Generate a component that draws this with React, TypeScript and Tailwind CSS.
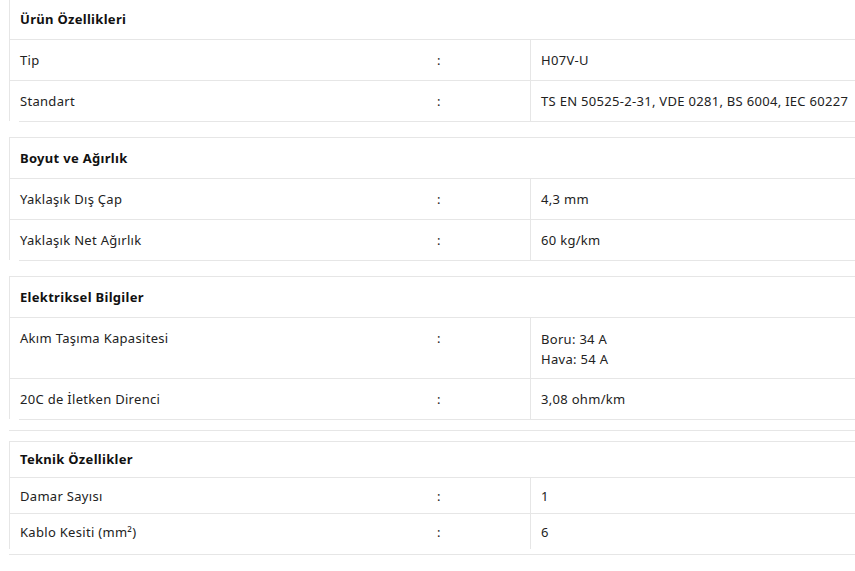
const sections = [
  {
    title: "Ürün Özellikleri",
    rows: [
      { label: "Tip", value: ["H07V-U"] },
      { label: "Standart", value: ["TS EN 50525-2-31, VDE 0281, BS 6004, IEC 60227"] },
    ],
  },
  {
    title: "Boyut ve Ağırlık",
    rows: [
      { label: "Yaklaşık Dış Çap", value: ["4,3 mm"] },
      { label: "Yaklaşık Net Ağırlık", value: ["60 kg/km"] },
    ],
  },
  {
    title: "Elektriksel Bilgiler",
    rows: [
      { label: "Akım Taşıma Kapasitesi", value: ["Boru: 34 A", "Hava: 54 A"] },
      { label: "20C de İletken Direnci", value: ["3,08 ohm/km"] },
    ],
  },
];

function Row({ label, value, last, h }: { label: string; value: string[]; last?: boolean; h: string }) {
  const multi = value.length > 1;
  return (
    <div className={`flex ${last ? "" : "border-b border-[#e6e6e6]"}`}>
      <div className={`w-[427px] pl-[10px] flex ${multi ? "items-start pt-[11px]" : "items-center pt-[2px]"} ${h}`}>
        {label}
      </div>
      <div className={`w-[93px] flex ${multi ? "items-start pt-[11px]" : "items-center pt-[2px]"}`}>:</div>
      <div className={`flex-1 border-l border-[#e6e6e6] pl-[10px] flex flex-col ${multi ? "justify-start pt-[11px] leading-[20px]" : "justify-center pt-[2px]"}`}>
        {value.map((v) => (
          <span key={v}>{v}</span>
        ))}
      </div>
    </div>
  );
}

export default function App() {
  return (
    <div
      className="w-[855px] h-[571px] overflow-hidden bg-white text-[13px] tracking-[0.3px] text-[#222]"
      style={{ fontFamily: "'Noto Sans', sans-serif" }}
    >
      <div className="pl-[9px] w-[900px]">
        {sections.map((s, i) => (
          <div key={s.title} className={i === 0 ? "" : "mt-[15px]"}>
            <div className={`border-l border-[#e6e6e6] ${i === 0 ? "" : "border-t"}`}>
              <div className={`flex items-center pl-[10px] pt-[1px] font-bold text-[#111] border-b border-[#e6e6e6] ${i === 0 ? "h-[40px]" : "h-[41px]"}`}>
                {s.title}
              </div>
              {s.rows.map((r, j) => (
                <Row
                  key={r.label}
                  label={r.label}
                  value={r.value}
                  last={j === s.rows.length - 1}
                  h={r.value.length > 1 ? "h-[60px]" : "h-[40px]"}
                />
              ))}
            </div>
            <div className="ml-[10px] border-t border-[#e6e6e6]" />
          </div>
        ))}

        {/* extra rule under Elektriksel */}
        <div className="mt-[10px] border-t border-[#e6e6e6]" />

        <div className="mt-[10px]">
          <div className="border-l border-t border-[#e6e6e6]">
            <div className="flex items-center pl-[10px] pt-[1px] h-[36px] font-bold text-[#111] border-b border-[#e6e6e6]">
              Teknik Özellikler
            </div>
            <Row label="Damar Sayısı" value={["1"]} h="h-[35px]" />
            <Row label="Kablo Kesiti (mm²)" value={["6"]} last h="h-[35px]" />
          </div>
          <div className="mt-[5px] border-t border-[#e6e6e6]" />
        </div>
      </div>
    </div>
  );
}
